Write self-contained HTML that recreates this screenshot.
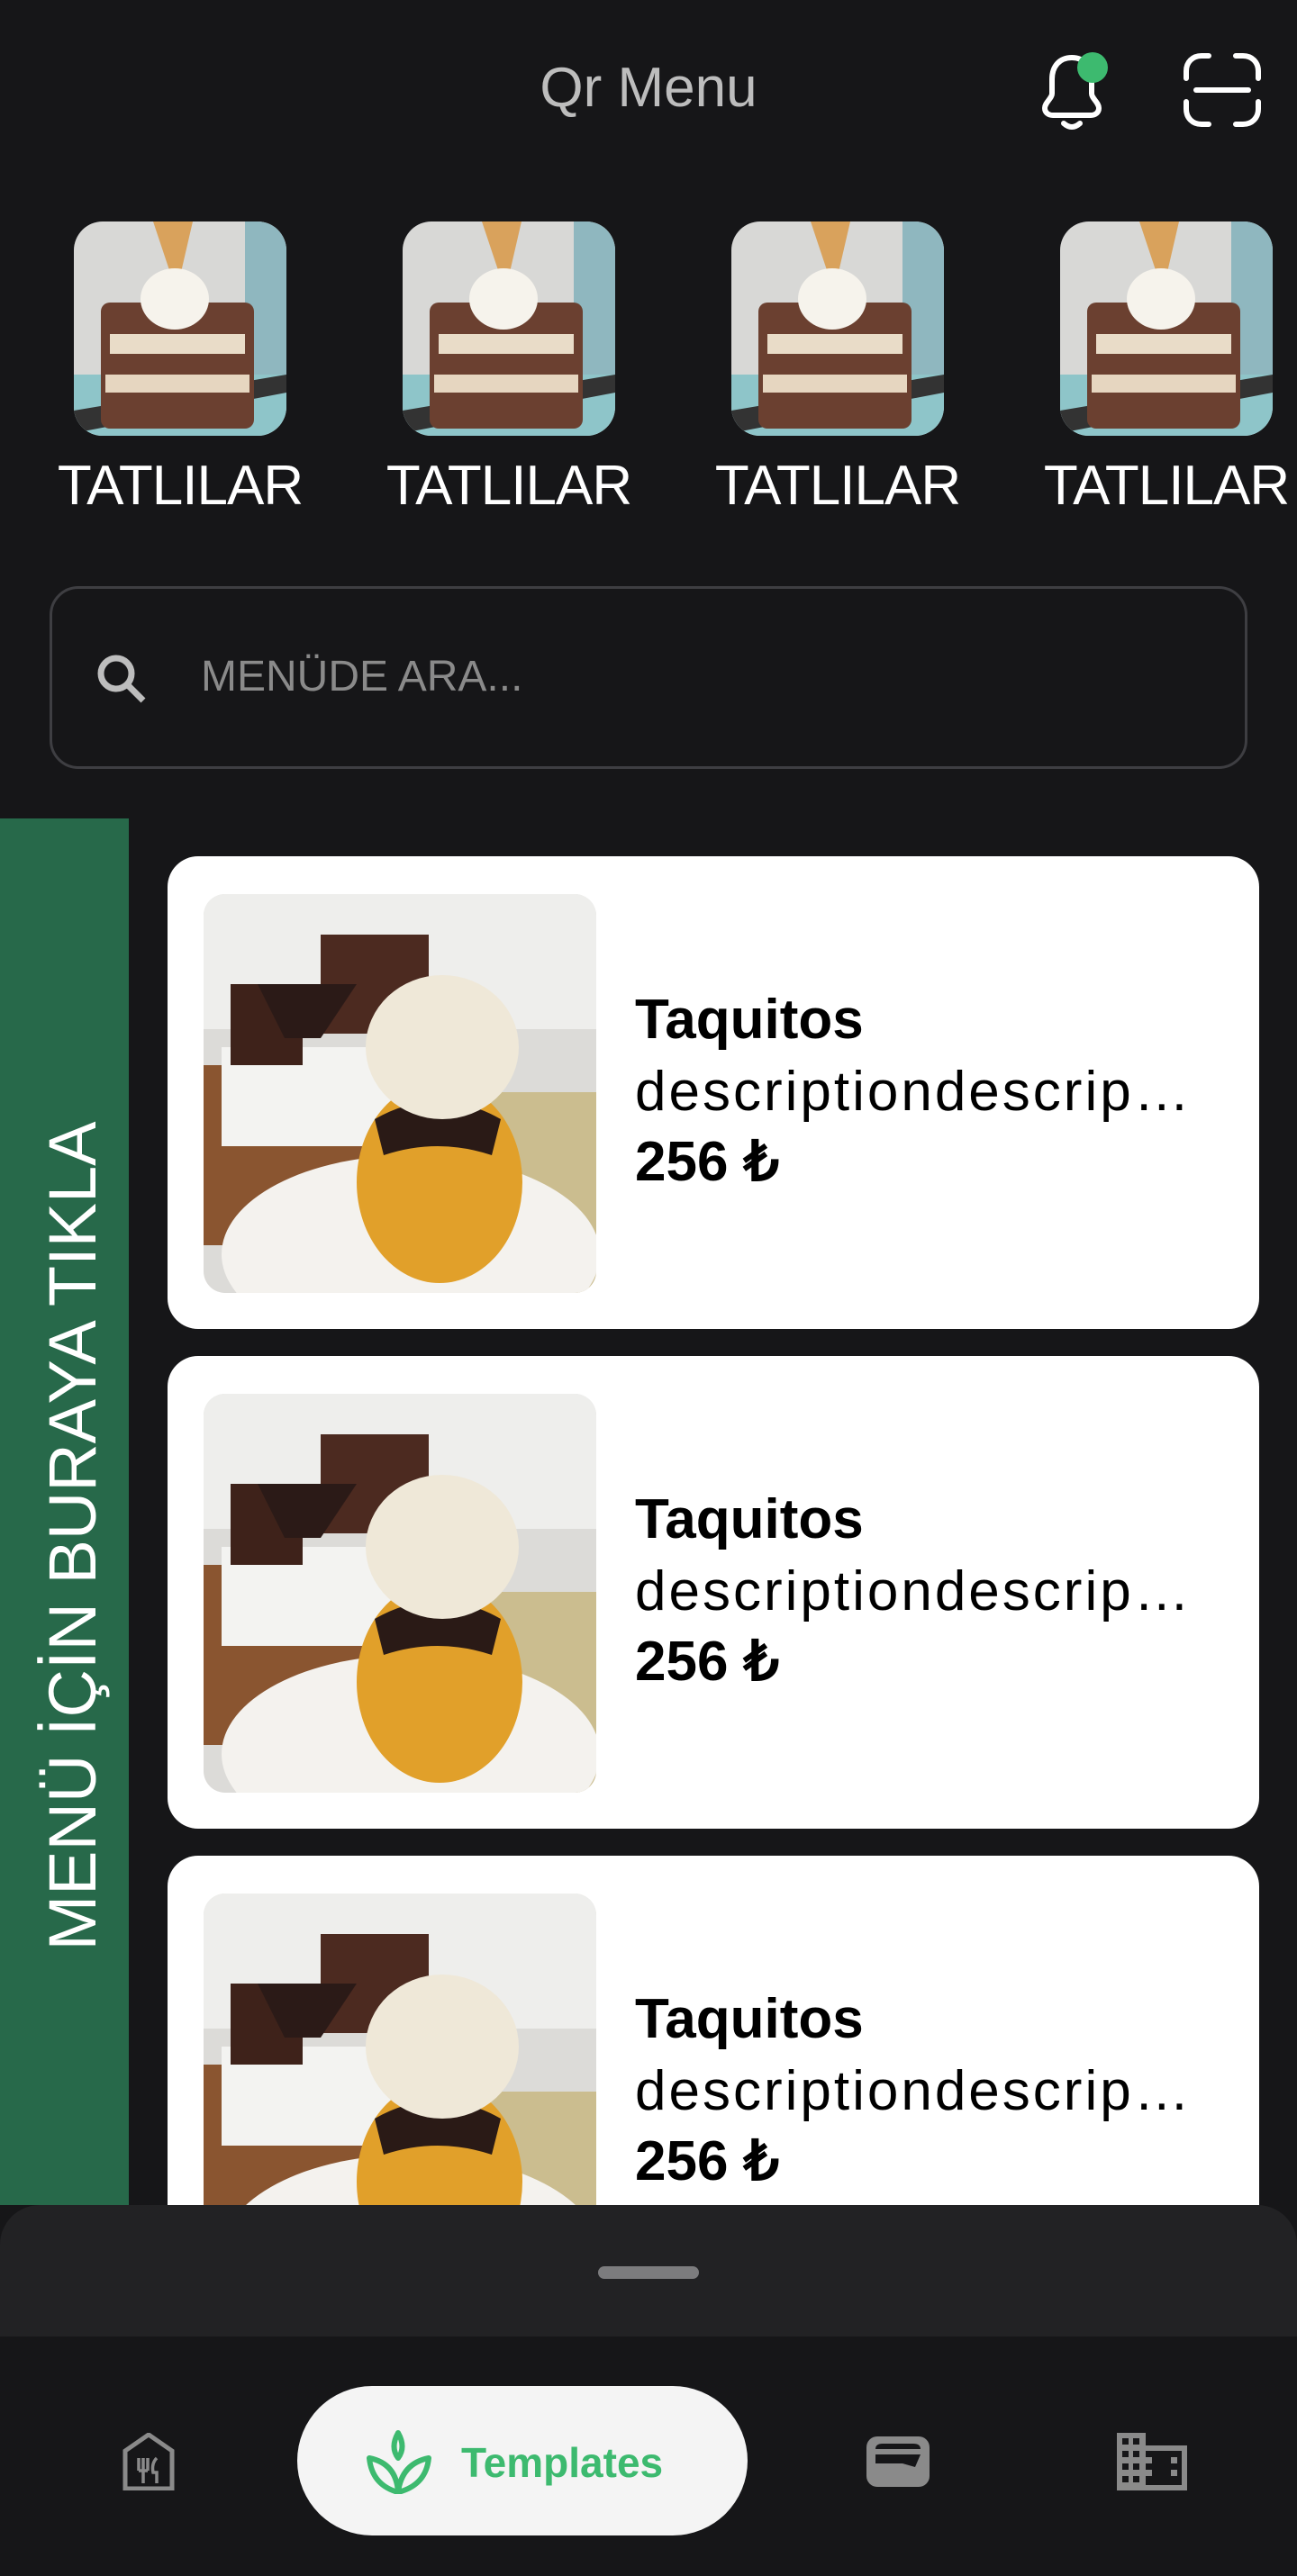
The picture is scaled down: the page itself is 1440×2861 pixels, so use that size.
<!DOCTYPE html>
<html><head><meta charset="utf-8">
<style>
*{margin:0;padding:0;box-sizing:border-box}
body{width:1440px;height:2861px;background:#161618;position:relative;overflow:hidden;font-family:"Liberation Sans",sans-serif}
.abs{position:absolute}
.title{left:0;width:1440px;top:58px;text-align:center;color:#bdbdbd;font-size:62px;line-height:80px}
.cat{width:236px;height:238px;top:246px;border-radius:32px;overflow:hidden}
.lbl{top:500px;width:330px;text-align:center;color:#fff;font-size:62px;line-height:80px;letter-spacing:-1px}
.search{left:55px;top:651px;width:1330px;height:203px;border:3px solid #3e3e42;border-radius:32px}
.ph{left:223px;top:722px;color:#8a8a8a;font-size:48px;line-height:60px}
.side{left:0;top:909px;width:143px;height:1540px;background:#27694a}
.vt{left:81px;top:1706px;transform:translate(-50%,-50%) rotate(-90deg);white-space:nowrap;color:#fff;font-size:74px;line-height:80px}
.card{left:186px;width:1212px;height:525px;background:#fff;border-radius:34px}
.cimg{left:40px;top:42px;width:436px;height:443px;border-radius:24px;overflow:hidden}
.t1{left:519px;top:142px;font-size:62px;font-weight:bold;color:#000;line-height:80px}
.t2{left:519px;top:222px;font-size:62px;color:#000;line-height:80px;letter-spacing:3px}
.t3{left:519px;top:300px;font-size:62px;font-weight:bold;color:#000;line-height:80px}
.sheet{left:0;top:2449px;width:1440px;height:146px;background:#222224;border-radius:44px 44px 0 0}
.handle{left:664px;top:2517px;width:112px;height:14px;border-radius:7px;background:#7c7c7e}
.nav{left:0;top:2595px;width:1440px;height:266px;background:#161618}
.pill{left:330px;top:2650px;width:500px;height:166px;border-radius:83px;background:#f4f4f4}
.ptxt{left:512px;top:2705px;font-size:46px;font-weight:bold;color:#3dba6f;line-height:60px}
</style></head><body>
<div class="abs title">Qr Menu</div>
<svg class="abs" style="left:1150px;top:55px" width="80" height="90" viewBox="0 0 80 90">
<path d="M40 9c-14 0-22 10-22 24v16c0 5-8 10-8 16 0 5 4 8 9 8h42c5 0 9-3 9-8 0-6-8-11-8-16V33C62 19 54 9 40 9z" fill="none" stroke="#fff" stroke-width="6" stroke-linejoin="round"/>
<path d="M31 82q9 8 18 0" fill="none" stroke="#fff" stroke-width="6" stroke-linecap="round"/>
<circle cx="63" cy="20" r="17" fill="#3dba6f"/>
</svg>
<svg class="abs" style="left:1312px;top:57px" width="90" height="86" viewBox="0 0 90 86">
<g fill="none" stroke="#fff" stroke-width="6" stroke-linecap="round">
<path d="M5 30V22C5 12 12 5 22 5h8M60 5h8c10 0 17 7 17 17v8M85 56v8c0 10-7 17-17 17h-8M30 81h-8C12 81 5 74 5 64v-8"/>
<path d="M16 43h58"/></g></svg>

<div class="abs cat" style="left:82px"><svg width="236" height="238" viewBox="0 0 236 238"><rect width="236" height="238" fill="#d8d8d6"/><rect x="190" y="0" width="46" height="170" fill="#8fb7bf"/><rect y="170" width="236" height="68" fill="#8ec5c9"/><path d="M0 210l236-40v20L0 235z" fill="#333"/><rect x="30" y="90" width="170" height="140" rx="10" fill="#6b4030"/><rect x="40" y="125" width="150" height="22" fill="#e9dcc8"/><rect x="35" y="170" width="160" height="20" fill="#e6d6c0"/><path d="M88 0h44l-18 78z" fill="#d9a25c"/><ellipse cx="112" cy="86" rx="38" ry="34" fill="#f6f3ec"/></svg></div>
<div class="abs cat" style="left:447px"><svg width="236" height="238" viewBox="0 0 236 238"><rect width="236" height="238" fill="#d8d8d6"/><rect x="190" y="0" width="46" height="170" fill="#8fb7bf"/><rect y="170" width="236" height="68" fill="#8ec5c9"/><path d="M0 210l236-40v20L0 235z" fill="#333"/><rect x="30" y="90" width="170" height="140" rx="10" fill="#6b4030"/><rect x="40" y="125" width="150" height="22" fill="#e9dcc8"/><rect x="35" y="170" width="160" height="20" fill="#e6d6c0"/><path d="M88 0h44l-18 78z" fill="#d9a25c"/><ellipse cx="112" cy="86" rx="38" ry="34" fill="#f6f3ec"/></svg></div>
<div class="abs cat" style="left:812px"><svg width="236" height="238" viewBox="0 0 236 238"><rect width="236" height="238" fill="#d8d8d6"/><rect x="190" y="0" width="46" height="170" fill="#8fb7bf"/><rect y="170" width="236" height="68" fill="#8ec5c9"/><path d="M0 210l236-40v20L0 235z" fill="#333"/><rect x="30" y="90" width="170" height="140" rx="10" fill="#6b4030"/><rect x="40" y="125" width="150" height="22" fill="#e9dcc8"/><rect x="35" y="170" width="160" height="20" fill="#e6d6c0"/><path d="M88 0h44l-18 78z" fill="#d9a25c"/><ellipse cx="112" cy="86" rx="38" ry="34" fill="#f6f3ec"/></svg></div>
<div class="abs cat" style="left:1177px"><svg width="236" height="238" viewBox="0 0 236 238"><rect width="236" height="238" fill="#d8d8d6"/><rect x="190" y="0" width="46" height="170" fill="#8fb7bf"/><rect y="170" width="236" height="68" fill="#8ec5c9"/><path d="M0 210l236-40v20L0 235z" fill="#333"/><rect x="30" y="90" width="170" height="140" rx="10" fill="#6b4030"/><rect x="40" y="125" width="150" height="22" fill="#e9dcc8"/><rect x="35" y="170" width="160" height="20" fill="#e6d6c0"/><path d="M88 0h44l-18 78z" fill="#d9a25c"/><ellipse cx="112" cy="86" rx="38" ry="34" fill="#f6f3ec"/></svg></div>
<div class="abs lbl" style="left:35px">TATLILAR</div>
<div class="abs lbl" style="left:400px">TATLILAR</div>
<div class="abs lbl" style="left:765px">TATLILAR</div>
<div class="abs lbl" style="left:1130px">TATLILAR</div>

<div class="abs search"></div>
<svg class="abs" style="left:103px;top:722px" width="64" height="64" viewBox="0 0 64 64"><circle cx="26" cy="26" r="17" fill="none" stroke="#bdbdbd" stroke-width="7"/><path d="M38 38l18 18" stroke="#bdbdbd" stroke-width="7"/></svg>
<div class="abs ph">MENÜDE ARA...</div>

<div class="abs side"></div>
<div class="abs vt">MENÜ İÇİN BURAYA TIKLA</div>

<div class="abs card" style="top:951px"><div class="abs cimg"><svg width="436" height="443" viewBox="0 0 436 443"><rect width="436" height="443" fill="#dcdbd8"/><rect y="0" width="436" height="150" fill="#eeeeec"/><rect x="0" y="190" width="230" height="200" fill="#8a5530"/><rect x="20" y="170" width="200" height="110" fill="#f3f3f1"/><rect x="130" y="45" width="120" height="110" fill="#4c2a20"/><rect x="30" y="100" width="80" height="90" fill="#3e221a"/><path d="M60 100h110l-40 60h-40z" fill="#2b1a17"/><path d="M240 220h196v223H300z" fill="#cbbd8f"/><ellipse cx="230" cy="400" rx="210" ry="110" fill="#f4f2ee"/><ellipse cx="262" cy="320" rx="92" ry="112" fill="#e1a02a"/><path d="M190 250q70-40 140 0l-10 40q-60-20-120 0z" fill="#2a1a16"/><ellipse cx="265" cy="170" rx="85" ry="80" fill="#efe8d8"/></svg></div><div class="abs t1">Taquitos</div><div class="abs t2">descriptiondescrip…</div><div class="abs t3">256 ₺</div></div>
<div class="abs card" style="top:1506px"><div class="abs cimg"><svg width="436" height="443" viewBox="0 0 436 443"><rect width="436" height="443" fill="#dcdbd8"/><rect y="0" width="436" height="150" fill="#eeeeec"/><rect x="0" y="190" width="230" height="200" fill="#8a5530"/><rect x="20" y="170" width="200" height="110" fill="#f3f3f1"/><rect x="130" y="45" width="120" height="110" fill="#4c2a20"/><rect x="30" y="100" width="80" height="90" fill="#3e221a"/><path d="M60 100h110l-40 60h-40z" fill="#2b1a17"/><path d="M240 220h196v223H300z" fill="#cbbd8f"/><ellipse cx="230" cy="400" rx="210" ry="110" fill="#f4f2ee"/><ellipse cx="262" cy="320" rx="92" ry="112" fill="#e1a02a"/><path d="M190 250q70-40 140 0l-10 40q-60-20-120 0z" fill="#2a1a16"/><ellipse cx="265" cy="170" rx="85" ry="80" fill="#efe8d8"/></svg></div><div class="abs t1">Taquitos</div><div class="abs t2">descriptiondescrip…</div><div class="abs t3">256 ₺</div></div>
<div class="abs card" style="top:2061px"><div class="abs cimg"><svg width="436" height="443" viewBox="0 0 436 443"><rect width="436" height="443" fill="#dcdbd8"/><rect y="0" width="436" height="150" fill="#eeeeec"/><rect x="0" y="190" width="230" height="200" fill="#8a5530"/><rect x="20" y="170" width="200" height="110" fill="#f3f3f1"/><rect x="130" y="45" width="120" height="110" fill="#4c2a20"/><rect x="30" y="100" width="80" height="90" fill="#3e221a"/><path d="M60 100h110l-40 60h-40z" fill="#2b1a17"/><path d="M240 220h196v223H300z" fill="#cbbd8f"/><ellipse cx="230" cy="400" rx="210" ry="110" fill="#f4f2ee"/><ellipse cx="262" cy="320" rx="92" ry="112" fill="#e1a02a"/><path d="M190 250q70-40 140 0l-10 40q-60-20-120 0z" fill="#2a1a16"/><ellipse cx="265" cy="170" rx="85" ry="80" fill="#efe8d8"/></svg></div><div class="abs t1">Taquitos</div><div class="abs t2">descriptiondescrip…</div><div class="abs t3">256 ₺</div></div>

<div class="abs sheet"></div>
<div class="abs handle"></div>
<div class="abs nav"></div>
<div class="abs pill"></div>
<svg class="abs" style="left:405px;top:2698px" width="76" height="72" viewBox="0 0 76 72"><g fill="none" stroke="#3dba6f" stroke-width="6" stroke-linejoin="round"><path d="M37 4q-9 16 0 28q9-12 0-28z"/><path d="M5 32q30 6 32 38Q8 62 5 32zM71 32q-30 6-34 38Q68 62 71 32z"/></g></svg>
<div class="abs ptxt">Templates</div>
<svg class="abs" style="left:136px;top:2702px" width="58" height="64" viewBox="0 0 58 64"><path d="M3 20L29 2l26 18v42H3z" fill="none" stroke="#8a8a8a" stroke-width="5"/><path d="M18 28v14m5-14v14m5-14v14M18 42h10M23 42v14M38 28q-6 6-4 16h4v12" fill="none" stroke="#8a8a8a" stroke-width="3.5"/></svg>
<svg class="abs" style="left:962px;top:2706px" width="70" height="56" viewBox="0 0 70 56"><rect x="0" y="0" width="70" height="56" rx="12" fill="#8a8a8a"/><path d="M10 14q0-6 8-6h34q8 0 8 6z" fill="#161618"/><path d="M10 20h50l-6 14-14-4H10z" fill="#161618"/></svg>
<svg class="abs" style="left:1240px;top:2702px" width="80" height="64" viewBox="0 0 80 64"><path d="M0 0h32v14h46v50H0z" fill="#8a8a8a"/><g fill="#161618"><rect x="6" y="6" width="7" height="7"/><rect x="18" y="6" width="7" height="7"/><rect x="6" y="20" width="7" height="7"/><rect x="18" y="20" width="7" height="7"/><rect x="6" y="34" width="7" height="7"/><rect x="18" y="34" width="7" height="7"/><rect x="6" y="48" width="7" height="7"/><rect x="18" y="48" width="7" height="7"/><rect x="32" y="20" width="40" height="38"/></g><g fill="#8a8a8a"><rect x="32" y="27" width="7" height="7"/><rect x="32" y="41" width="7" height="7"/><rect x="60" y="27" width="7" height="7"/><rect x="60" y="41" width="7" height="7"/></g></svg>
</body></html>
